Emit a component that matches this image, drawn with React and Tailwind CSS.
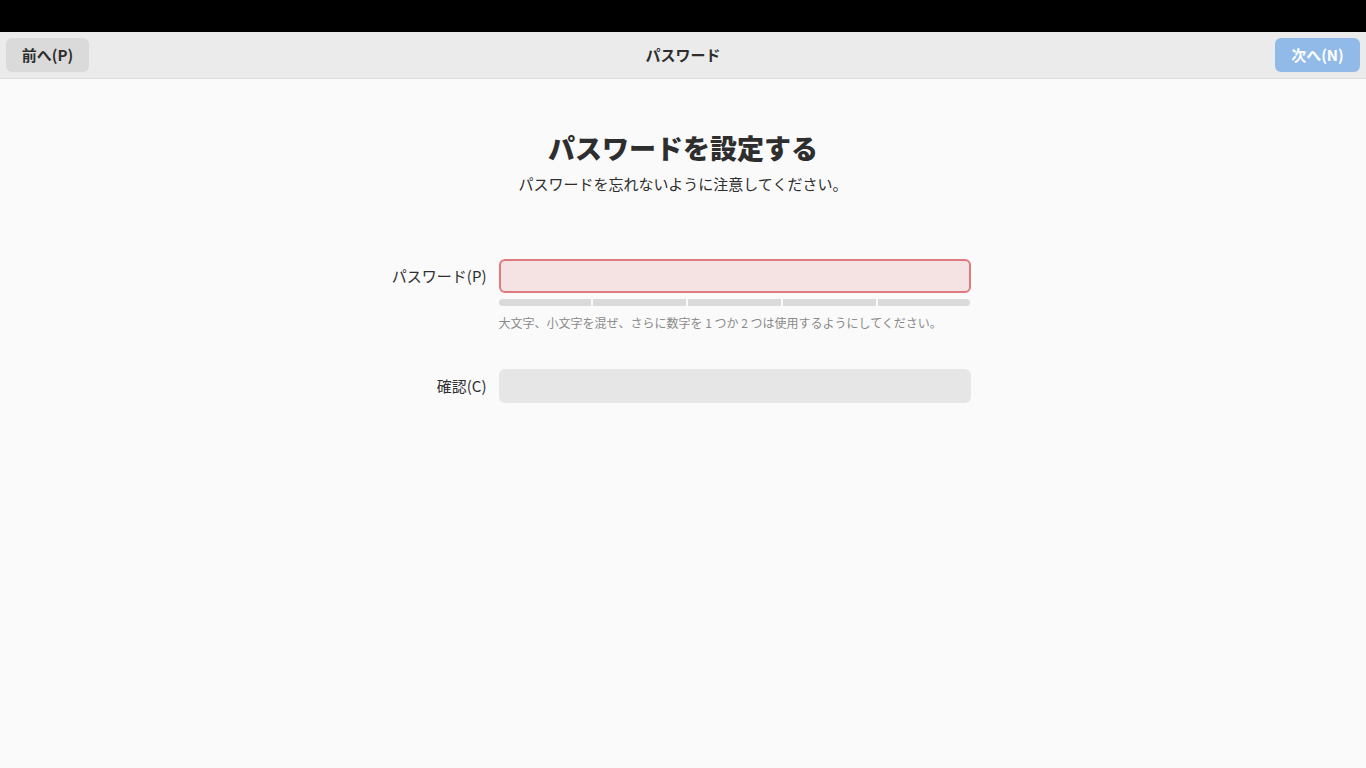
import React from 'react'

const font = { fontFamily: '"Noto Sans CJK JP", "Noto Sans", sans-serif' }

function StrengthBar() {
    return (
        <div className="mt-[6px] flex gap-[2px] h-[7px]">
            <div className="flex-1 bg-[#dadada] rounded-l-full"></div>
            <div className="flex-1 bg-[#dadada]"></div>
            <div className="flex-1 bg-[#dadada]"></div>
            <div className="flex-1 bg-[#dadada]"></div>
            <div className="flex-1 bg-[#dadada] rounded-r-full"></div>
        </div>
    )
}

export default function App() {
    return (
        <div className="w-[1366px] h-[768px] flex flex-col bg-[#fafafa] text-[#2e2e2e] overflow-hidden" style={font}>
            <div className="h-[32px] bg-black shrink-0"></div>

            {/* header bar */}
            <div className="h-[47px] shrink-0 bg-[#ebebeb] border-b border-[#dedede] flex items-center justify-between px-[6px]">
                <button className="h-[34px] w-[83px] rounded-[6px] bg-[#dadada] text-[15px] font-bold text-[#2e2e2e]">
                    前へ(P)
                </button>
                <div className="text-[15px] font-bold pl-[2px]">パスワード</div>
                <button className="h-[34px] w-[85px] rounded-[6px] bg-[#91bae9] text-[15px] font-bold text-white">
                    次へ(N)
                </button>
            </div>

            <div className="flex flex-col items-center">
                <h1 className="mt-[50px] text-[27px] leading-[38px] font-black text-[#2e2e2e]">パスワードを設定する</h1>
                <p className="mt-[7px] text-[15px] leading-[20px]">パスワードを忘れないように注意してください。</p>

                <div className="mt-[65px] mr-[1px] grid grid-cols-[92px_472px] gap-x-[12px] items-start">
                    <div className="h-[34px] flex items-center justify-end text-[15px] whitespace-nowrap">パスワード(P)</div>
                    <div>
                        <input
                            type="password"
                            className="w-full h-[34px] rounded-[6px] border-2 border-[#e0787f] bg-[#f5e3e4] outline-none px-2"
                        />
                        <StrengthBar />
                        <div className="mt-[9px] text-[12px] leading-[16px] text-[#8a8a8a]">
                            大文字、小文字を混ぜ、さらに数字を 1 つか 2 つは使用するようにしてください。
                        </div>
                    </div>

                    <div className="mt-[38px] h-[34px] flex items-center justify-end text-[15px]">確認(C)</div>
                    <div className="mt-[38px]">
                        <input
                            type="password"
                            className="w-full h-[34px] rounded-[6px] bg-[#e6e6e6] outline-none px-2"
                        />
                    </div>
                </div>
            </div>
        </div>
    )
}
